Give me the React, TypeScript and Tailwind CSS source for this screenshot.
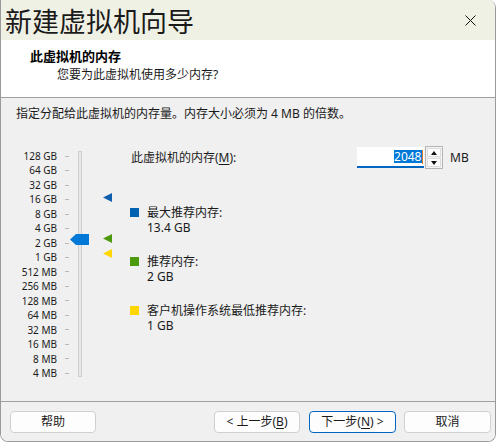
import React from "react";

const SCALE = [
  "128 GB", "64 GB", "32 GB", "16 GB", "8 GB", "4 GB", "2 GB", "1 GB",
  "512 MB", "256 MB", "128 MB", "64 MB", "32 MB", "16 MB", "8 MB", "4 MB",
];

const LEGEND = [
  { color: "bg-[#0063b1]", label: "最大推荐内存:", value: "13.4 GB", mt: "mt-[36px]" },
  { color: "bg-[#4e9a0f]", label: "推荐内存:", value: "2 GB", mt: "mt-[19px]" },
  { color: "bg-[#ffd600]", label: "客户机操作系统最低推荐内存:", value: "1 GB", mt: "mt-[19px]" },
];

function Marker({ color, top }: { color: string; top: string }) {
  return (
    <svg className={`absolute left-[102px] ${top}`} width="9" height="9" viewBox="0 0 9 9">
      <polygon points="0,4.5 9,0 9,9" fill={color} />
    </svg>
  );
}

function MemorySlider() {
  return (
    <div className="relative w-[129px] shrink-0 pt-[3px]">
      <div className="flex">
        <div className="w-[56px] flex flex-col text-right text-[10px] text-[#1a1a1a] font-['Noto_Sans',sans-serif]">
          {SCALE.map((s) => (
            <div key={s} className="h-[14.47px] leading-[14.47px] whitespace-nowrap">{s}</div>
          ))}
        </div>
        <div className="ml-[8px] w-[4px] flex flex-col">
          {SCALE.map((s) => (
            <div key={s} className="h-[14.47px] flex items-center">
              <div className="w-[4px] h-[1px] bg-[#b8b8b8]" />
            </div>
          ))}
        </div>
        <div className="ml-[9px] mt-[2px] w-[4px] h-[226px] bg-[#e7e7e7] border border-[#cfcfcf]" />
      </div>
      {/* thumb */}
      <svg className="absolute left-[69px] top-[88px]" width="19" height="11" viewBox="0 0 19 11">
        <polygon points="0,5.5 6,0 19,0 19,11 6,11" fill="#0078d7" />
      </svg>
      <Marker color="#0f5fae" top="top-[47px]" />
      <Marker color="#4e9a0f" top="top-[88px]" />
      <Marker color="#ffd600" top="top-[103px]" />
    </div>
  );
}

function Spinner() {
  return (
    <div className="ml-[1px] w-[18px] h-[23px] border border-[#b5b5b5] bg-[#f3f3f3] flex flex-col p-[1px] gap-[1px]">
      <div className="flex-1 bg-white border border-[#dcdcdc] flex items-center justify-center">
        <svg width="6" height="4" viewBox="0 0 6 4"><polygon points="0,4 3,0 6,4" fill="#111" /></svg>
      </div>
      <div className="flex-1 bg-white border border-[#dcdcdc] flex items-center justify-center">
        <svg width="6" height="4" viewBox="0 0 6 4"><polygon points="0,0 6,0 3,4" fill="#111" /></svg>
      </div>
    </div>
  );
}

function Btn({ children, w, ml, primary }: { children: React.ReactNode; w: string; ml: string; primary?: boolean }) {
  return (
    <button
      type="button"
      className={`${w} ${ml} h-[22px] rounded-[4px] bg-[#fdfdfd] text-[12px] text-[#1a1a1a] flex items-center justify-center border ${
        primary ? "border-[#0067c0]" : "border-[#d0d0d0]"
      }`}
    >
      {children}
    </button>
  );
}

export default function App() {
  return (
    <div className="w-[499px] h-[443px] bg-white font-['Noto_Sans','Noto_Sans_CJK_SC',sans-serif]">
      <div className="w-[496px] h-[442px] flex flex-col border border-t-0 border-[#9a9a9a] rounded-tr-[8px] rounded-b-[8px] overflow-hidden">
        {/* title bar */}
        <div className="h-[40px] shrink-0 bg-[#f0f1e5] flex items-center justify-between pl-[4px] pr-[19px]">
          <span className="text-[27px] leading-none text-[#1a1a1a] font-['Noto_Sans_CJK_SC',sans-serif]">新建虚拟机向导</span>
          <svg width="11" height="11" viewBox="0 0 11 11">
            <path d="M0.5 0.5 L10.5 10.5 M10.5 0.5 L0.5 10.5" stroke="#111" strokeWidth="1" />
          </svg>
        </div>

        {/* header */}
        <div className="h-[58px] shrink-0 bg-white border-b border-[#a0a0a0] pl-[29px] pt-[8px]">
          <div className="text-[13px] leading-[17px] font-bold text-black">此虚拟机的内存</div>
          <div className="ml-[27px] mt-[1px] text-[12px] leading-[17px] text-[#1a1a1a]">您要为此虚拟机使用多少内存?</div>
        </div>

        {/* body */}
        <div className="flex-1 bg-[#f0f0f0] text-[12px] text-[#1a1a1a]">
          <div className="pl-[15px] pt-[8px] leading-[16px]">指定分配给此虚拟机的内存量。内存大小必须为 4 MB 的倍数。</div>

          <div className="mt-[24px] flex">
            <MemorySlider />

            <div className="flex flex-col">
              <div className="h-[23px] flex items-center">
                <div className="w-[227px] pl-[1px]">
                  此虚拟机的内存(<span className="underline underline-offset-2">M</span>):
                </div>
                <div className="w-[67px] h-[21px] bg-white border-b-2 border-[#0067c0] flex items-center justify-end pr-[1px]">
                  <span className="bg-[#0078d7] text-white leading-[13px] px-[0.5px]">2048</span>
                  <span className="w-[1px] h-[14px] bg-[#e0762a]" />
                </div>
                <Spinner />
                <span className="ml-[7px]">MB</span>
              </div>

              {LEGEND.map((l) => (
                <div key={l.label} className={`${l.mt} flex items-start`}>
                  <div className={`w-[9px] h-[9px] mt-[3px] ${l.color}`} />
                  <div className="ml-[8px] leading-[15px]">
                    <div>{l.label}</div>
                    <div>{l.value}</div>
                  </div>
                </div>
              ))}
            </div>
          </div>
        </div>

        {/* footer */}
        <div className="h-[40px] shrink-0 bg-[#f0f0f0] border-t border-[#a0a0a0] flex items-start pt-[9px] pl-[9px]">
          <Btn w="w-[86px]" ml="ml-0">帮助</Btn>
          <Btn w="w-[86px]" ml="ml-[118px]">
            &lt; 上一步(<span className="underline underline-offset-2">B</span>)
          </Btn>
          <Btn w="w-[87px]" ml="ml-[9px]" primary>
            下一步(<span className="underline underline-offset-2">N</span>) &gt;
          </Btn>
          <Btn w="w-[87px]" ml="ml-[8px]">取消</Btn>
        </div>
      </div>
    </div>
  );
}
